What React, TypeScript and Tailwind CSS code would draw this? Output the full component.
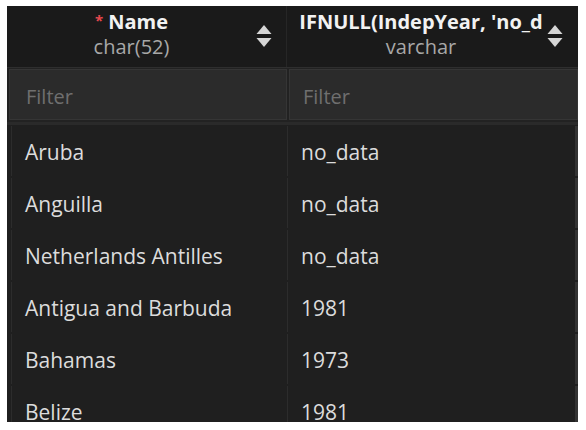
import React from 'react';

const rows = [
  ['Aruba', 'no_data'],
  ['Anguilla', 'no_data'],
  ['Netherlands Antilles', 'no_data'],
  ['Antigua and Barbuda', '1981'],
  ['Bahamas', '1973'],
  ['Belize', '1981'],
];

const SortIcon = () => (
  <svg width="16" height="26" viewBox="0 0 16 26" className="shrink-0">
    <path d="M8 1 L15.5 10 L0.5 10 Z" fill="#d6d6d6" />
    <path d="M0.5 14 L15.5 14 L8 23 Z" fill="#d6d6d6" />
  </svg>
);

export default function App() {
  return (
    <div className="w-[586px] h-[430px] bg-white pt-[6px] pl-[7px]" style={{ fontFamily: '"Open Sans", "Noto Sans", sans-serif' }}>
      <div className="w-[571px] h-[416px] bg-[#1f1f1f] overflow-hidden flex flex-col">
        {/* header */}
        <div className="h-[62px] shrink-0 bg-[#1a1a1a] grid grid-cols-[280px_291px] border-b border-[#2e2e2e]">
          <div className="flex items-center pr-[14px] border-r border-[#262626]">
            <div className="flex-1 flex flex-col items-center leading-none pb-[4px]">
              <div className="text-[20px] font-bold text-[#f2f2f2]">
                <span className="text-[#e5484d] text-[15px] align-[3px] mr-[5px]">*</span>Name
              </div>
              <div className="text-[20px] text-[#a8a8a8] mt-[5px]">char(52)</div>
            </div>
            <SortIcon />
          </div>
          <div className="flex items-center pr-[15px] pl-[8px] min-w-0">
            <div className="flex-1 min-w-0 flex flex-col items-center leading-none pb-[4px]">
              <div className="text-[20px] font-bold text-[#f2f2f2] whitespace-nowrap">IFNULL(IndepYear, 'no_d</div>
              <div className="text-[20px] text-[#a8a8a8] mt-[5px]">varchar</div>
            </div>
            <SortIcon />
          </div>
        </div>
        {/* filter row */}
        <div className="h-[57px] shrink-0 grid grid-cols-[280px_291px] bg-[#222222] border-b-[3px] border-[#2a2a2a] px-[2px] pt-[1px] pb-[2px]">
          <div className="bg-[#2b2b2b] border border-[#353535] flex items-center pl-[16px] pt-[4px] text-[20px] text-[#6f6f6f] mr-[2px]">Filter</div>
          <div className="bg-[#2b2b2b] border border-[#353535] flex items-center pl-[13px] pt-[4px] text-[20px] text-[#6f6f6f] mr-[2px]">Filter</div>
        </div>
        {/* rows */}
        {rows.map(([a, b]) => (
          <div key={a} className="h-[52px] shrink-0 grid grid-cols-[280px_291px] text-[21px] text-[#dcdcdc]">
            <div className="flex items-center pl-[13px] pt-[4px] border-l border-[#2c2c2c] ml-[4px] my-[1px]">{a}</div>
            <div className="flex items-center pl-[13px] pt-[4px] border-l border-[#2c2c2c] border-r-[3px] border-r-[#333333] my-[1px]">{b}</div>
          </div>
        ))}
      </div>
    </div>
  );
}
